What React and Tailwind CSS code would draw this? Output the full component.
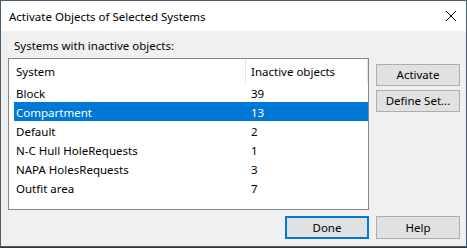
import React from 'react'

const rows = [
  { name: 'Block', count: 39 },
  { name: 'Compartment', count: 13, selected: true },
  { name: 'Default', count: 2 },
  { name: 'N-C Hull HoleRequests', count: 1 },
  { name: 'NAPA HolesRequests', count: 3 },
  { name: 'Outfit area', count: 7 },
]

// Windows-style push button
function Button({ children, primary, className = '' }) {
  return (
    <div
      className={
        'flex items-center justify-center bg-[#e1e1e1] text-[11.5px] text-black ' +
        (primary ? 'border-2 border-[#0078d7] ' : 'border border-[#adadad] ') +
        className
      }
    >
      {children}
    </div>
  )
}

export default function App() {
  return (
    <div
      className="w-[467px] h-[248px] bg-[#3a3530]"
      style={{ fontFamily: '"Noto Sans", "Liberation Sans", sans-serif' }}
    >
      <div className="h-[247px] border border-[#4a5d70] flex flex-col">
        {/* title bar */}
        <div className="h-[30px] bg-white flex items-center justify-between pl-[8px] pr-[9px]">
          <span className="text-[11.5px] text-black leading-none pt-[1px]">Activate Objects of Selected Systems</span>
          <svg width="12" height="12" viewBox="0 0 12 12">
            <path d="M1 1 L11 11 M11 1 L1 11" stroke="#000" strokeWidth="1" fill="none" />
          </svg>
        </div>

        {/* client area */}
        <div className="flex-1 bg-[#f0f0f0] flex flex-col">
          <div className="pl-[13px] pt-[7px] h-[27px] text-[11.5px] leading-[16px] text-black">
            Systems with inactive objects:
          </div>

          <div className="flex pl-[7px]">
            {/* list view */}
            <div className="w-[361px] h-[152px] border border-[#828790] bg-white flex flex-col">
              <div className="h-[24px] flex text-[11.5px] text-black">
                <div className="w-[236px] pl-[7px] pt-[1px] flex items-center">System</div>
                <div className="w-px h-[24px] bg-[#e5e5e5]" />
                <div className="flex-1 pl-[5px] pt-[1px] flex items-center">Inactive objects</div>
                <div className="w-px h-[24px] bg-[#e5e5e5]" />
              </div>
              <div className="pl-[5px] flex flex-col">
                {rows.map((r) => (
                  <div
                    key={r.name}
                    className={
                      'h-[19px] flex items-center pt-[2px] text-[11.5px] ' +
                      (r.selected ? 'bg-[#0078d7] text-white' : 'text-black')
                    }
                  >
                    <div className="w-[232px] pl-[2px]">{r.name}</div>
                    <div className="flex-1 pl-[5px]">{r.count}</div>
                  </div>
                ))}
              </div>
            </div>

            {/* side buttons */}
            <div className="flex flex-col gap-[4px] ml-[7px] pt-[6px]">
              <Button className="w-[84px] h-[22px]">Activate</Button>
              <Button className="w-[84px] h-[22px]">Define Set...</Button>
            </div>
          </div>

          <div className="flex justify-end gap-[7px] pr-[6px] pt-[6px]">
            <Button primary className="w-[84px] h-[23px]">Done</Button>
            <Button className="w-[84px] h-[23px]">Help</Button>
          </div>
        </div>
      </div>
    </div>
  )
}
